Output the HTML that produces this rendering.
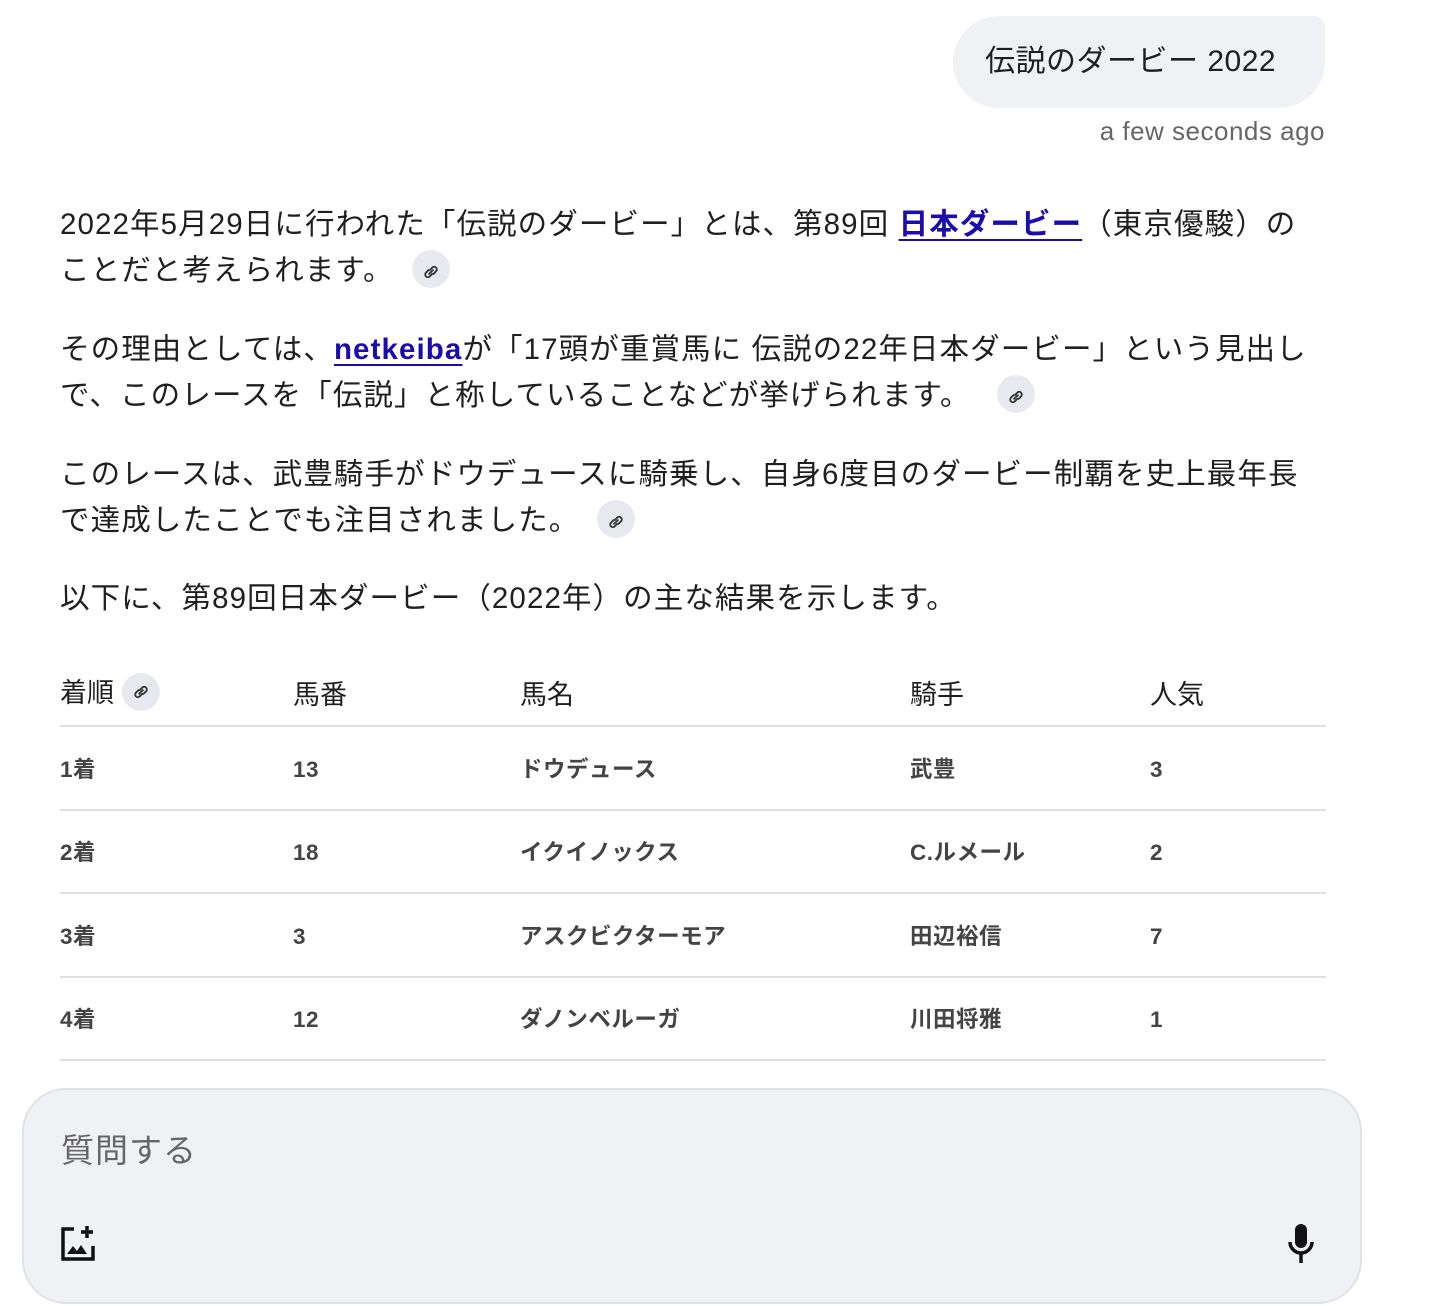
<!DOCTYPE html>
<html><head><meta charset="utf-8"><style>
*{box-sizing:border-box;margin:0;padding:0}
body{width:1453px;height:1306px;background:#fff;font-family:"Liberation Sans","Noto Sans CJK JP",sans-serif;color:#1f1f1f;position:relative;overflow:hidden}
.bubble{position:absolute;left:953px;top:16px;width:372px;height:92px;background:#f0f1f5;border-radius:46px 12px 46px 46px;font-size:30px;line-height:92px;padding-left:32px;color:#1f1f1f;letter-spacing:0.5px}
.ts{position:absolute;right:128px;top:116px;font-size:26px;color:#666;letter-spacing:0.5px}
.p{position:absolute;left:60px;width:1300px;font-size:29.5px;line-height:46px;letter-spacing:1.1px;white-space:nowrap}
a{color:#1a0dab;font-weight:bold;text-decoration:underline;text-underline-offset:5px;text-decoration-thickness:2px}
.lk{display:inline-block;width:38px;height:38px;border-radius:50%;background:#e8e9ee;vertical-align:middle;margin-left:18px;position:relative;top:-3px;text-align:center}
.lk svg{margin-top:9px}
table{position:absolute;left:60px;top:660px;width:1266px;border-collapse:collapse}
td,th{text-align:left;font-weight:normal;padding:0}
th{font-size:27px;height:66px;vertical-align:middle;border-bottom:2px solid #dde0e4}
td{font-size:22.5px;font-weight:bold;color:#444;height:83.5px;border-bottom:2px solid #dde0e4;letter-spacing:0.5px}
.n{position:relative;top:2px}
.inp{position:absolute;left:22px;top:1088px;width:1340px;height:216px;background:#f0f1f5;border:2px solid #e0e2e8;border-radius:44px}
.ph{position:absolute;left:37px;top:34px;font-size:33px;color:#666;letter-spacing:1px}
</style></head><body>
<div class="bubble">伝説のダービー 2022</div>
<div class="ts">a few seconds ago</div>
<div class="p" style="top:202px">2022年5月29日に行われた「伝説のダービー」とは、第89回 <a>日本ダービー</a>（東京優駿）の<br>ことだと考えられます。<span class="lk"><svg width="20" height="20" viewBox="0 0 16 16"><path d="M6.5 9.5l3-3M6 6.5l-2 2a2 2 0 003 3l2-2M10 9.5l2-2a2 2 0 00-3-3l-2 2" fill="none" stroke="#333" stroke-width="1.5" stroke-linecap="round"/></svg></span></div>
<div class="p" style="top:327px">その理由としては、<a>netkeiba</a>が「17頭が重賞馬に 伝説の22年日本ダービー」という見出し<br>で、このレースを「伝説」と称していることなどが挙げられます。<span class="lk" style="margin-left:26px"><svg width="20" height="20" viewBox="0 0 16 16"><path d="M6.5 9.5l3-3M6 6.5l-2 2a2 2 0 003 3l2-2M10 9.5l2-2a2 2 0 00-3-3l-2 2" fill="none" stroke="#333" stroke-width="1.5" stroke-linecap="round"/></svg></span></div>
<div class="p" style="top:452px">このレースは、武豊騎手がドウデュースに騎乗し、自身6度目のダービー制覇を史上最年長<br>で達成したことでも注目されました。<span class="lk"><svg width="20" height="20" viewBox="0 0 16 16"><path d="M6.5 9.5l3-3M6 6.5l-2 2a2 2 0 003 3l2-2M10 9.5l2-2a2 2 0 00-3-3l-2 2" fill="none" stroke="#333" stroke-width="1.5" stroke-linecap="round"/></svg></span></div>
<div class="p" style="top:576px">以下に、第89回日本ダービー（2022年）の主な結果を示します。</div>
<table>
<tr><th style="width:233px">着順<span class="lk" style="margin-left:8px"><svg width="20" height="20" viewBox="0 0 16 16"><path d="M6.5 9.5l3-3M6 6.5l-2 2a2 2 0 003 3l2-2M10 9.5l2-2a2 2 0 00-3-3l-2 2" fill="none" stroke="#333" stroke-width="1.5" stroke-linecap="round"/></svg></span></th><th style="width:227px">馬番</th><th style="width:390px">馬名</th><th style="width:240px">騎手</th><th>人気</th></tr>
<tr><td>1着</td><td><span class="n">13</span></td><td>ドウデュース</td><td>武豊</td><td><span class="n">3</span></td></tr>
<tr><td>2着</td><td><span class="n">18</span></td><td>イクイノックス</td><td>C.ルメール</td><td><span class="n">2</span></td></tr>
<tr><td>3着</td><td><span class="n">3</span></td><td>アスクビクターモア</td><td>田辺裕信</td><td><span class="n">7</span></td></tr>
<tr><td>4着</td><td><span class="n">12</span></td><td>ダノンベルーガ</td><td>川田将雅</td><td><span class="n">1</span></td></tr>
</table>
<div class="inp"><div class="ph">質問する</div>
<svg style="position:absolute;left:34px;top:134px" width="40" height="40" viewBox="0 0 40 40"><path d="M16 5H5v30h30V22" fill="none" stroke="#111" stroke-width="3.5"/><path d="M29 2v12M23 8h12" stroke="#111" stroke-width="3.5"/><path d="M9 30l6-8 4 5 4-6 6 9z" fill="#111"/></svg>
<svg style="position:absolute;left:1262px;top:132px" width="30" height="44" viewBox="0 0 30 44"><rect x="9" y="2" width="12" height="24" rx="6" fill="#111"/><path d="M4 20a11 11 0 0022 0M15 31v10" fill="none" stroke="#111" stroke-width="3.5"/></svg>
</div>
</body></html>
